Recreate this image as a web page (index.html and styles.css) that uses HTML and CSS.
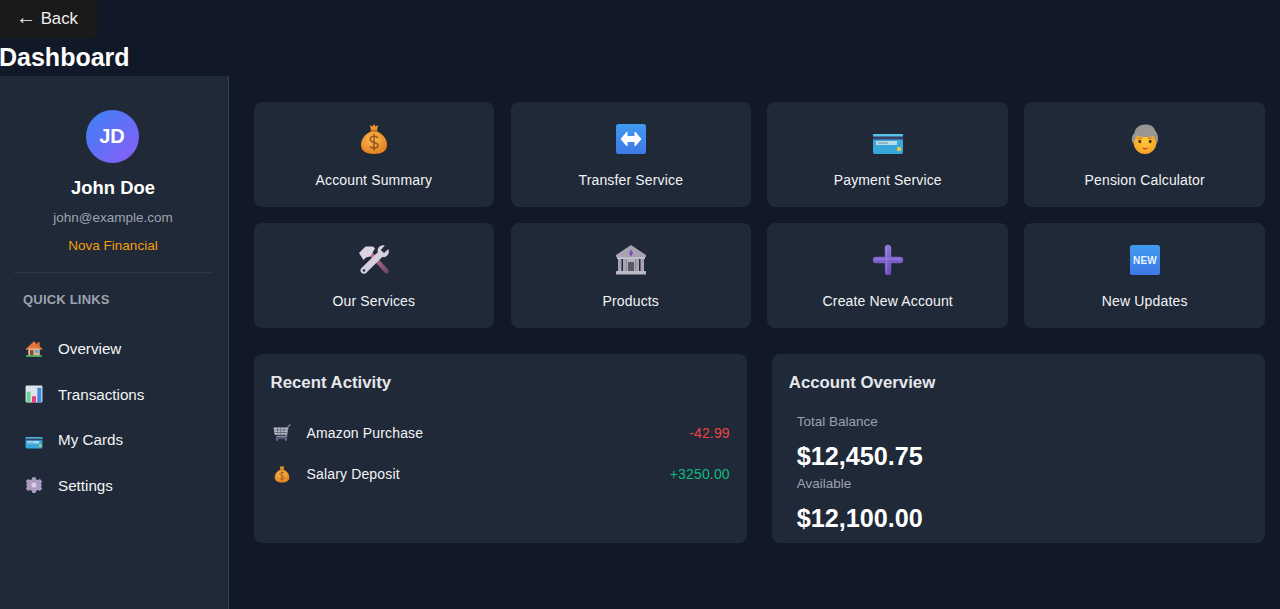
FILE: index.html
```html
<!DOCTYPE html>
<html lang="en">

<head>
    <meta charset="UTF-8">
    <title>Dashboard</title>
    <link rel="stylesheet" href="styles.css">
</head>

<body>
    <svg class="defs" width="0" height="0" aria-hidden="true">
        <defs>
            <radialGradient id="bagFill" cx="0.45" cy="0.35" r="0.75">
                <stop offset="0" stop-color="#fbbc4a" />
                <stop offset="1" stop-color="#e0761c" />
            </radialGradient>
            <radialGradient id="faceFill" cx="0.5" cy="0.45" r="0.6">
                <stop offset="0" stop-color="#ffcb3c" />
                <stop offset="1" stop-color="#f59f22" />
            </radialGradient>
            <linearGradient id="blueFill" x1="0" y1="0" x2="0" y2="1">
                <stop offset="0" stop-color="#3f9bf0" />
                <stop offset="1" stop-color="#3f78e8" />
            </linearGradient>
            <linearGradient id="plusFill" x1="0" y1="0" x2="0" y2="1">
                <stop offset="0" stop-color="#8f78da" />
                <stop offset="1" stop-color="#6c4cbc" />
            </linearGradient>
            <linearGradient id="handleFill" x1="0" y1="0" x2="1" y2="1">
                <stop offset="0" stop-color="#d9788c" />
                <stop offset="1" stop-color="#6a4468" />
            </linearGradient>
            <symbol id="i-bag" viewBox="0 0 32 32">
                <path d="M12 2l2.500 1.600L16 1l1.500 2.600L20 2l-1 5.500h-6z" fill="#e8962c" />
                <rect x="12.500" y="7" width="7" height="2" rx="1" fill="#b8691c" />
                <path d="M13 8.500C7 11 3 16 3 22c0 6 5 9 13 9s13-3 13-9c0-6-4-11-10-13.500z" fill="url(#bagFill)" />
                <path d="M19.800 15c-.9-1.100-2.200-1.700-3.800-1.700-2.300 0-3.800 1.200-3.800 3 0 4.100 7.800 2.200 7.800 6 0 1.800-1.600 2.900-4 2.900-1.600 0-3-.6-4-1.700M16 11v16.500" fill="none" stroke="#9a5420" stroke-width="1.600" />
            </symbol>
            <symbol id="i-arrows" viewBox="0 0 32 32">
                <rect x="1" y="1" width="30" height="30" rx="2.500" fill="url(#blueFill)" />
                <path d="M6 16l6-7v4.500h8V9l6 7-6 7v-4.500h-8V23z" fill="#fff" stroke="#fff" stroke-linejoin="round" />
            </symbol>
            <symbol id="i-card" viewBox="0 0 32 32">
                <rect x="1" y="11" width="30" height="20" rx="2" fill="#38a7dc" />
                <rect x="1" y="11" width="30" height="2.500" rx="1" fill="#55c4e8" />
                <rect x="1" y="13.500" width="30" height="3" fill="#3a3f66" />
                <rect x="4" y="18" width="21" height="4" fill="#b8dcec" />
                <rect x="6" y="19.500" width="10" height="1" fill="#7a8ca8" />
                <rect x="25" y="24" width="4" height="4" rx=".5" fill="#e8c840" />
            </symbol>
            <symbol id="i-elder" viewBox="0 0 32 32">
                <ellipse cx="16" cy="19" rx="11.500" ry="12" fill="url(#faceFill)" />
                <path d="M4.500 21C1.500 17 3 12 5.500 10 6 4 12 1 17 1.500c4 0 8 2 9 6 3 3 4.500 9 1.500 13.500-.5-3-1.500-6-3.500-8-4 1.500-11 1.500-15.500-.5C7 14.500 5 17 4.500 21z" fill="#999793" />
                <ellipse cx="10.800" cy="18.500" rx="1.400" ry="1.700" fill="#4a2f1c" />
                <ellipse cx="21.200" cy="18.500" rx="1.400" ry="1.700" fill="#4a2f1c" />
                <path d="M8.500 15.500q2.200-1.300 4.500 0M19 15.500q2.200-1.300 4.500 0" fill="none" stroke="#a8682c" stroke-width=".9" />
                <path d="M12.500 24.500q3.500 1.500 7 0-3.500 3.800-7 0z" fill="#c8342c" />
            </symbol>
            <symbol id="i-tools" viewBox="0 0 32 32">
                <path d="M11 11l3-3 16 17.500c1 1.200 1 2.200 0 3.200s-2.200 1-3.200 0z" fill="url(#handleFill)" />
                <path d="M1 9l6.500-6.500h7.500l2 2-5 8-4 1-2.500 2.500z" fill="#dcd6e4" />
                <path d="M30.500 5l-4.500 4-3.200-3 4-4.500c-4.300-1-8 2.200-7 6.700L4 23.500c-2 2-2 3.800-.5 5.200s3.700 1.500 5.300-.5L24.300 13c4.500 1 7.700-3.500 6.200-8z" fill="#d6cfe0" />
                <circle cx="6" cy="26.500" r="1.300" fill="#222a38" />
            </symbol>
            <symbol id="i-bank" viewBox="0 0 32 32">
                <path d="M16 1L1 11v2h30v-2z" fill="#a8a2b2" />
                <path d="M16 5l-2 4 2 4 2-4z" fill="#7a52b8" />
                <rect x="2" y="13" width="28" height="2" fill="#c4bfcc" />
                <rect x="3" y="15" width="3.500" height="12" fill="#a8a2b2" />
                <rect x="8" y="15" width="3.500" height="12" fill="#a8a2b2" />
                <rect x="20.500" y="15" width="3.500" height="12" fill="#a8a2b2" />
                <rect x="25.500" y="15" width="3.500" height="12" fill="#a8a2b2" />
                <rect x="11.500" y="15" width="9" height="12" fill="#b4afbc" />
                <rect x="13" y="18" width="6" height="9" fill="#5a5666" />
                <rect x="1" y="27" width="30" height="3.500" rx=".5" fill="#bdb8c6" />
            </symbol>
            <symbol id="i-plus" viewBox="0 0 32 32">
                <path d="M12.800 4a3.200 3.200 0 0 1 6.400 0v8.800H28a3.200 3.200 0 0 1 0 6.400h-8.800V28a3.200 3.200 0 0 1-6.400 0v-8.800H4a3.200 3.200 0 0 1 0-6.400h8.800z" fill="url(#plusFill)" />
                <path d="M14.500 3v26M3 15h26" stroke="#a794e6" stroke-width="1" stroke-linecap="round" opacity=".6" />
            </symbol>
            <symbol id="i-new" viewBox="0 0 32 32">
                <rect x="1" y="1" width="30" height="30" rx="2.500" fill="url(#blueFill)" />
                <text x="16" y="19.500" text-anchor="middle" font-family="Liberation Sans, sans-serif" font-size="10" font-weight="700" fill="#e8f2ff">NEW</text>
            </symbol>
            <symbol id="i-house" viewBox="0 0 32 32">
                <path d="M16 2L1 16l2 2 3-2.500V28h20V15.500l3 2.500 2-2-5-4.700V4h-4v4.500z" fill="#e8743c" />
                <rect x="6" y="15" width="20" height="13" fill="#d8b89c" />
                <rect x="9" y="18" width="6" height="10" fill="#8a4a2c" />
                <rect x="18" y="18" width="6" height="5" fill="#58a8d8" />
                <rect x="2" y="27" width="28" height="3" fill="#4cb46c" />
            </symbol>
            <symbol id="i-chart" viewBox="0 0 32 32">
                <rect x="1" y="1" width="30" height="30" rx="2" fill="#dfe3ec" />
                <rect x="3" y="12" width="7" height="19" fill="#6cd48c" />
                <rect x="12.500" y="20" width="7" height="11" fill="#e83c7c" />
                <rect x="22" y="5" width="7" height="26" fill="#3c8ce0" />
            </symbol>
            <symbol id="i-gear" viewBox="0 0 32 32">
                <path d="M13 2h6l1 4 3 1.300 3.500-2 4 4.200-2 3.500L29.800 16l-1.300 3 2 3.500-4 4.200-3.500-2-3 1.300-1 4h-6l-1-4-3-1.300-3.500 2-4-4.200 2-3.500L2.200 16l1.300-3-2-3.500 4-4.200 3.500 2 3-1.300z" fill="#a89cc0" />
                <circle cx="16" cy="16" r="4.500" fill="#d8d0e4" />
            </symbol>
            <symbol id="i-cart" viewBox="0 0 32 32">
                <path d="M31 1l-4 3-3 18H6" fill="none" stroke="#8a8fa8" stroke-width="2" />
                <path d="M1 6h25l-2 13H3z" fill="#c4c6d4" />
                <path d="M8 6l1 13M14 6v13M20 6l-1 13M2 10.500h23M2.500 15h22" stroke="#4a5068" stroke-width="1.300" fill="none" />
                <path d="M5 25h20" stroke="#7a80a8" stroke-width="2" />
                <circle cx="7" cy="28" r="2" fill="#6a70a0" />
                <circle cx="23" cy="28" r="2" fill="#6a70a0" />
            </symbol>
        </defs>
    </svg>

    <button class="back-btn" type="button"><span class="back-arrow">←</span> Back</button>
    <h1 class="page-title">Dashboard</h1>

    <div class="layout">
        <aside class="sidebar">
            <div class="profile">
                <div class="avatar">JD</div>
                <h2 class="profile-name">John Doe</h2>
                <p class="profile-email">john@example.com</p>
                <p class="profile-org">Nova Financial</p>
            </div>
            <h3 class="links-title">QUICK LINKS</h3>
            <ul class="links">
                <li><svg class="link-icon"><use href="#i-house" /></svg>Overview</li>
                <li><svg class="link-icon"><use href="#i-chart" /></svg>Transactions</li>
                <li><svg class="link-icon"><use href="#i-card" /></svg>My Cards</li>
                <li><svg class="link-icon"><use href="#i-gear" /></svg>Settings</li>
            </ul>
        </aside>

        <main class="content">
            <div class="services">
                <div class="service"><svg class="service-icon"><use href="#i-bag" /></svg>Account Summary</div>
                <div class="service"><svg class="service-icon"><use href="#i-arrows" /></svg>Transfer Service</div>
                <div class="service"><svg class="service-icon"><use href="#i-card" /></svg>Payment Service</div>
                <div class="service"><svg class="service-icon"><use href="#i-elder" /></svg>Pension Calculator</div>
                <div class="service"><svg class="service-icon"><use href="#i-tools" /></svg>Our Services</div>
                <div class="service"><svg class="service-icon"><use href="#i-bank" /></svg>Products</div>
                <div class="service"><svg class="service-icon"><use href="#i-plus" /></svg>Create New Account</div>
                <div class="service"><svg class="service-icon"><use href="#i-new" /></svg>New Updates</div>
            </div>

            <div class="panels">
                <section class="panel">
                    <h3 class="panel-title">Recent Activity</h3>
                    <div class="activity">
                        <svg class="activity-icon"><use href="#i-cart" /></svg>
                        <span class="activity-name">Amazon Purchase</span>
                        <span class="minus">-42.99</span>
                    </div>
                    <div class="activity">
                        <svg class="activity-icon"><use href="#i-bag" /></svg>
                        <span class="activity-name">Salary Deposit</span>
                        <span class="plus">+3250.00</span>
                    </div>
                </section>
                <section class="panel">
                    <h3 class="panel-title">Account Overview</h3>
                    <div class="balances">
                        <p class="balance-label">Total Balance</p>
                        <p class="balance-value">$12,450.75</p>
                        <p class="balance-label">Available</p>
                        <p class="balance-value">$12,100.00</p>
                    </div>
                </section>
            </div>
        </main>
    </div>
</body>

</html>
```

FILE: styles.css
```css
/* Dashboard styles */
* {
    box-sizing: border-box;
}

html,
body {
    height: 100%;
}

body {
    margin: 0;
    display: flex;
    flex-direction: column;
    overflow: hidden;
    font-family: "Liberation Sans", Arial, sans-serif;
    background-color: #111827;
    color: #fff;
}

.defs {
    position: absolute;
}

.back-btn {
    align-self: flex-start;
    width: 98px;
    height: 38px;
    padding: 0 0 0 16px;
    text-align: left;
    font-family: inherit;
    font-size: 16.800px;
    line-height: 38px;
    color: #f0f0f0;
    background-color: #1a1a1a;
    border: none;
    border-radius: 0 0 8px 0;
    cursor: pointer;
}

.back-arrow {
    font-size: 20px;
    line-height: 1;
}

.page-title {
    margin: 0 0 0 -1px;
    height: 38px;
    line-height: 38px;
    font-size: 25px;
    font-weight: 700;
}

.layout {
    flex: 1;
    display: flex;
    min-height: 0;
}

.sidebar {
    width: 229px;
    flex-shrink: 0;
    padding: 34px 16px 0 14px;
    background-color: #1f2937;
    border-right: 1px solid #374151;
}

.profile {
    display: flex;
    flex-direction: column;
    align-items: center;
    padding-bottom: 16px;
    border-bottom: 1px solid #2d3748;
}

.avatar {
    display: flex;
    align-items: center;
    justify-content: center;
    width: 53px;
    height: 53px;
    margin-right: 2px;
    font-size: 20px;
    font-weight: 700;
    border-radius: 50%;
    background: linear-gradient(135deg, #3b82f6, #8b5cf6);
}

.profile-name {
    margin: 13px 0 0;
    font-size: 18.400px;
    line-height: 24px;
}

.profile-email {
    margin: 8px 0 0;
    font-size: 13.500px;
    line-height: 20px;
    color: #9ca3af;
}

.profile-org {
    margin: 8px 0 0;
    font-size: 13.500px;
    line-height: 20px;
    color: #f59e0b;
}

.links-title {
    margin: 19px 0 0 9px;
    font-size: 13px;
    line-height: 16px;
    font-weight: 700;
    letter-spacing: 0.2px;
    color: #9ca3af;
}

.links {
    margin: 18px 0 0;
    padding: 0;
    list-style: none;
}

.links li {
    display: flex;
    align-items: center;
    gap: 15px;
    height: 45.500px;
    padding-left: 11px;
    font-size: 15.200px;
    color: #f3f4f6;
}

.link-icon {
    width: 18px;
    height: 18px;
}

.content {
    flex: 1;
    padding: 26px 15px 0 24.550px;
}

.services {
    display: grid;
    grid-template-columns: repeat(4, 1fr);
    gap: 16px 16.400px;
}

.service {
    display: flex;
    flex-direction: column;
    align-items: center;
    height: 105px;
    padding-top: 21px;
    font-size: 14px;
    letter-spacing: 0.15px;
    color: #f3f4f6;
    background-color: #1f2937;
    border-radius: 8px;
}

.service-icon {
    width: 32px;
    height: 32px;
    margin-bottom: 16.500px;
}

.panels {
    display: grid;
    grid-template-columns: 1fr 1fr;
    gap: 25px;
    margin-top: 26px;
}

.panel {
    height: 189px;
    padding: 17px;
    background-color: #1f2937;
    border-radius: 8px;
}

.panel-title {
    margin: 0 0 17px;
    font-size: 16.800px;
    line-height: 24px;
    color: #e5e7eb;
}

.activity {
    display: flex;
    align-items: center;
    height: 41.500px;
    font-size: 14px;
    letter-spacing: 0.15px;
    color: #f3f4f6;
}

.activity-icon {
    width: 18px;
    height: 18px;
    margin: 0 16px 0 2px;
}

.activity-name {
    flex: 1;
}

.minus {
    color: #ef4444;
}

.plus {
    color: #10b981;
}

.balances {
    margin-top: 1px;
    padding-left: 8px;
}

.balance-label {
    margin: 0;
    font-size: 13.500px;
    line-height: 20px;
    color: #9ca3af;
}

.balance-value {
    margin: 8px 0 1px;
    font-size: 25.200px;
    line-height: 33px;
    font-weight: 700;
}
```
